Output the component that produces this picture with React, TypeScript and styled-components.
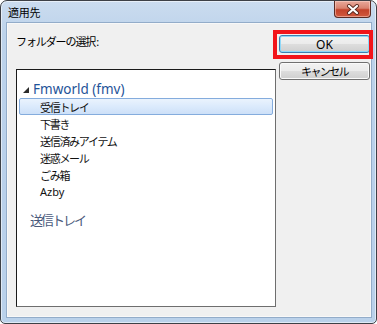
import React from "react";
import styled, { createGlobalStyle } from "styled-components";

const Global = createGlobalStyle`
  html, body { margin: 0; padding: 0; background: #ffffff; }
  body { font-family: "Noto Sans CJK JP", "Noto Sans", sans-serif; }
`;

const Window = styled.div`
  box-sizing: border-box;
  width: 377px;
  height: 324px;
  border: 1px solid #3d4046;
  border-radius: 7px 7px 5px 5px;
  background: linear-gradient(180deg, #cbdcef 0%, #bdd3eb 10%, #b9d0ea 60%, #bad1ea 100%);
  display: flex;
  flex-direction: column;
  padding: 0 5px 6px 6px;
  box-shadow: inset 0 0 0 1px rgba(255, 255, 255, 0.55);
`;

const TitleBar = styled.div`
  height: 22px;
  display: flex;
  align-items: flex-start;
  justify-content: space-between;
`;

const Title = styled.span`
  font-family: "Noto Sans CJK JP", sans-serif;
  font-size: 11px;
  letter-spacing: -0.3px;
  line-height: 16px;
  color: #000;
  margin-top: 3px;
  margin-left: 1px;
`;

const CloseButton = styled.div`
  box-sizing: border-box;
  width: 37px;
  height: 17px;
  border: 1px solid #5b2b24;
  border-top: none;
  border-radius: 0 0 4px 4px;
  background: linear-gradient(180deg, #e8a99b 0%, #d9826f 45%, #c3422a 55%, #d1593e 100%);
  display: flex;
  align-items: center;
  justify-content: center;
  box-shadow: inset 0 0 0 1px rgba(255, 220, 210, 0.5);
`;

const Client = styled.div`
  flex: 1;
  box-sizing: border-box;
  background: #f0f0f0;
  border: 1px solid #f8f8f8;
  box-shadow: 0 0 0 1px #93acc9;
  display: flex;
  padding: 9px 0 9px 8px;
  gap: 3px;
`;

const LeftColumn = styled.div`
  width: 260px;
  display: flex;
  flex-direction: column;
`;

const Label = styled.div`
  font-family: "Noto Sans CJK JP", sans-serif;
  font-size: 11px;
  letter-spacing: -1.1px;
  line-height: 16px;
  color: #000;
  height: 16px;
  margin-bottom: 20px;
  white-space: nowrap;
`;

const Colon = styled.span`
  font-family: "Noto Sans", sans-serif;
  letter-spacing: 0;
  margin-left: 1px;
`;

const ListBox = styled.div`
  flex: 1;
  box-sizing: border-box;
  background: #fff;
  border-top: 1px solid #1a1a1a;
  border-left: 1px solid #1a1a1a;
  border-right: 1px solid #6e6e6e;
  border-bottom: 1px solid #6e6e6e;
  padding: 10px 2px 0 2px;
  display: flex;
  flex-direction: column;
`;

const RootRow = styled.div`
  display: flex;
  align-items: center;
  height: 18px;
  padding-left: 4px;
  font-family: "Noto Sans", "Noto Sans CJK JP", sans-serif;
  font-size: 13.5px;
  color: #1f5499;
  white-space: nowrap;
`;

const OutboxRow = styled.div`
  display: flex;
  align-items: center;
  height: 20px;
  margin-top: 9px;
  padding-left: 11px;
  font-family: "Noto Sans CJK JP", sans-serif;
  font-size: 13px;
  letter-spacing: -2px;
  color: #4a5a7c;
  white-space: nowrap;
`;

const Arrow = styled.svg`
  width: 6px;
  height: 6px;
  margin-right: 4px;
  margin-top: 2px;
`;

const Item = styled.div<{ $selected?: boolean; $latin?: boolean }>`
  box-sizing: border-box;
  height: 17px;
  display: flex;
  align-items: center;
  padding-left: 20px;
  font-family: ${(p) => (p.$latin ? '"Noto Sans", sans-serif' : '"Noto Sans CJK JP", sans-serif')};
  font-size: 11px;
  letter-spacing: ${(p) => (p.$latin ? "0" : "-1.3px")};
  color: #111;
  border: 1px solid ${(p) => (p.$selected ? "#84acdd" : "transparent")};
  border-radius: 2px;
  background: ${(p) =>
    p.$selected ? "linear-gradient(180deg, #eaf3fd 0%, #dbeafc 50%, #cde0f8 100%)" : "transparent"};
`;

const RightColumn = styled.div`
  width: 91px;
  display: flex;
  flex-direction: column;
  gap: 9px;
  padding-top: 2px;
`;

const Button = styled.div<{ $default?: boolean }>`
  position: relative;
  box-sizing: border-box;
  height: 18px;
  border: 1px solid ${(p) => (p.$default ? "#3c7fb1" : "#707070")};
  border-radius: 3px;
  background: linear-gradient(180deg, #f2f2f2 0%, #ebebeb 48%, #dddddd 52%, #cfcfcf 100%);
  box-shadow: inset 0 0 0 1px ${(p) => (p.$default ? "#8fd8f8" : "#fafafa")};
  display: flex;
  align-items: center;
  justify-content: center;
  font-family: ${(p) => (p.$default ? '"Noto Sans", sans-serif' : '"Noto Sans CJK JP", sans-serif')};
  font-size: ${(p) => (p.$default ? "12px" : "11px")};
  letter-spacing: ${(p) => (p.$default ? "0" : "-1.6px")};
  color: #000;
`;

const Highlight = styled.div`
  position: absolute;
  left: -7px;
  top: -6px;
  width: 100px;
  height: 29px;
  box-sizing: border-box;
  border: 4px solid #f2141a;
  pointer-events: none;
`;

const items: { t: string; latin?: boolean }[] = [
  { t: "下書き" },
  { t: "送信済みアイテム" },
  { t: "迷惑メール" },
  { t: "ごみ箱" },
  { t: "Azby", latin: true },
];

export default function App() {
  return (
    <>
      <Global />
      <Window>
        <TitleBar>
          <Title>適用先</Title>
          <CloseButton>
            <svg width="14" height="11" viewBox="0 0 14 11">
              <path d="M3 2 L11 9 M11 2 L3 9" stroke="#5a2a20" strokeWidth="4" strokeLinecap="round" />
              <path d="M3 2 L11 9 M11 2 L3 9" stroke="#ffffff" strokeWidth="2.2" strokeLinecap="round" />
            </svg>
          </CloseButton>
        </TitleBar>
        <Client>
          <LeftColumn>
            <Label>
              フォルダーの選択<Colon>:</Colon>
            </Label>
            <ListBox>
              <RootRow>
                <Arrow viewBox="0 0 6 6">
                  <polygon points="6,0 6,6 0,6" fill="#2b2b2b" />
                </Arrow>
                Fmworld (fmv)
              </RootRow>
              <Item $selected>受信トレイ</Item>
              {items.map((i) => (
                <Item key={i.t} $latin={i.latin}>
                  {i.t}
                </Item>
              ))}
              <OutboxRow>送信トレイ</OutboxRow>
            </ListBox>
          </LeftColumn>
          <RightColumn>
            <Button $default>
              OK
              <Highlight />
            </Button>
            <Button>キャンセル</Button>
          </RightColumn>
        </Client>
      </Window>
    </>
  );
}
